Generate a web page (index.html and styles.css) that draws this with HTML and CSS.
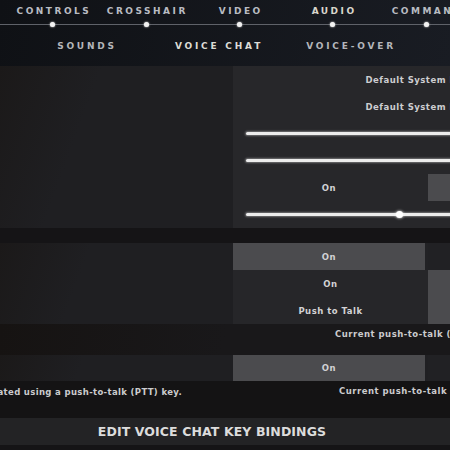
FILE: index.html
```html
<!DOCTYPE html>
<html>
  <head>
    <title>Settings - Audio</title>
    <meta name="viewport" content="width=device-width">
    <link rel="stylesheet" href="styles.css">
  </head>
  <body>
    <div class="header">
      <nav class="tabs">
        <div class="tab"><span>CONTROLS</span><i class="dot"></i></div>
        <div class="tab"><span>CROSSHAIR</span><i class="dot"></i></div>
        <div class="tab"><span>VIDEO</span><i class="dot"></i></div>
        <div class="tab active"><span>AUDIO</span><i class="dot"></i></div>
        <div class="tab"><span>COMMAND</span><i class="dot"></i></div>
      </nav>
      <nav class="subtabs">
        <div class="subtab">SOUNDS</div>
        <div class="subtab active">VOICE CHAT</div>
        <div class="subtab">VOICE-OVER</div>
      </nav>
    </div>

    <!-- devices and volumes -->
    <section class="panel devices">
      <div class="labels"></div>
      <div class="values">
        <div class="row text">Default System Device</div>
        <div class="row text">Default System Device</div>
        <div class="row"><div class="slider"></div></div>
        <div class="row"><div class="slider"></div></div>
        <div class="row toggle">
          <div class="opt">On</div>
          <div class="opt sel slim"></div>
        </div>
        <div class="row"><div class="slider"><i class="knob"></i></div></div>
      </div>
    </section>

    <!-- party / team voice -->
    <section class="panel voice">
      <div class="labels"></div>
      <div class="values grid3">
        <div class="opt sel">On</div>
        <div class="opt off"></div>
        <div class="opt dark">On</div>
        <div class="opt sel tall"></div>
        <div class="opt dark">Push to Talk</div>
      </div>
    </section>
    <div class="info">
      <div class="desc"></div>
      <div class="note">Current push-to-talk (PTT) key: V</div>
    </div>

    <section class="panel team">
      <div class="labels"></div>
      <div class="values toggle">
        <div class="opt sel">On</div>
        <div class="opt off"></div>
      </div>
    </section>
    <div class="info second">
      <div class="desc"><span>Team voice chat is activated using a push-to-talk (PTT) key.</span></div>
      <div class="note">Current push-to-talk (PTT) key: U</div>
    </div>

    <div class="bindings">EDIT VOICE CHAT KEY BINDINGS</div>
  </body>
</html>
```

FILE: styles.css
```css
* { margin: 0; padding: 0; box-sizing: border-box; }

body {
  width: 450px;
  height: 450px;
  overflow: hidden;
  background: #151416;
  font-family: "DejaVu Sans", sans-serif;
  font-weight: bold;
  color: #cfcfd1;
}

/* top navigation */
.header {
  height: 66px;
  background: linear-gradient(100deg, #0f1115, #191c23);
  overflow: hidden;
}

.tabs {
  display: grid;
  grid-template-columns: repeat(5, 93.4px);
  padding-left: 6px;
  height: 34px;
  background: linear-gradient(to bottom, transparent 24px, #5f6269 24px, #5f6269 25px, transparent 25px);
}

.tab {
  display: flex;
  flex-direction: column;
  align-items: center;
  padding-top: 5px;
  font-size: 9px;
  letter-spacing: 2.5px;
  color: #b9bcc2;
  white-space: nowrap;
}
.tab > span {
  line-height: 13px;
  margin-right: -2.5px;
}
.tab.active { color: #d9d6cc; }

.dot {
  width: 5px;
  height: 5px;
  margin-top: 4px;
  border-radius: 50%;
  background: #f2f2f2;
  box-shadow: 0 0 2px #fff;
}

.subtabs {
  display: grid;
  grid-template-columns: repeat(3, 132px);
  padding-left: 21px;
  padding-top: 6px;
}
.subtab {
  text-align: center;
  font-size: 9px;
  letter-spacing: 2.8px;
  line-height: 12px;
  color: #b4b6ba;
  white-space: nowrap;
}
.subtab.active { color: #dcdcd6; }

/* setting panels */
.panel {
  display: grid;
  grid-template-columns: 233px 384px;
  background: #1f1f22;
}
.labels {
  background: linear-gradient(110deg, #1b1919, #1f1f22 35%);
}
.values {
  background: #27272a;
}

.devices { height: 160px; }
.devices .values {
  display: grid;
  grid-template-rows: repeat(6, 1fr);
}

.row {
  display: flex;
  align-items: center;
}
.row.text {
  justify-content: center;
  font-size: 8.5px;
  letter-spacing: 0.5px;
  color: #cdcdd0;
}

.slider {
  position: relative;
  width: 100%;
  height: 3px;
  margin-left: 13px;
  border-radius: 2px;
  background: #ececec;
  box-shadow: 0 0 2px 1px rgba(255, 255, 255, 0.35);
}
.knob {
  position: absolute;
  left: 150px;
  top: -2px;
  width: 7px;
  height: 7px;
  border-radius: 50%;
  background: #fff;
  box-shadow: 0 0 3px #fff;
}

.toggle {
  display: grid;
  grid-template-columns: 192px 189px;
  column-gap: 3px;
}

.opt {
  display: flex;
  align-items: center;
  justify-content: center;
  font-size: 8.5px;
  letter-spacing: 0.5px;
  color: #d2d2d4;
}
.opt.sel { background: #4b4b4e; }
.opt.off { background: #212124; }
.opt.dark { background: #262629; }
.opt.slim { height: 27px; }

.voice {
  height: 81px;
  margin-top: 17px;
}
.grid3 {
  display: grid;
  grid-template-columns: 195px 189px;
  grid-template-rows: repeat(3, 27px);
  background: #222225;
}
.grid3 > .opt.sel:first-child { margin-right: 3px; }
.grid3 .tall { grid-column: 2; grid-row: 2 / span 2; }
.grid3 .dark:nth-child(3) { grid-column: 1; grid-row: 2; }
.grid3 .dark:nth-child(5) { grid-column: 1; grid-row: 3; }

/* descriptions under a panel */
.info {
  display: grid;
  grid-template-columns: 233px 384px;
  height: 31px;
  background: linear-gradient(100deg, #161312, #19181a 50%);
  font-size: 8.5px;
  letter-spacing: 0.5px;
  color: #cbcbcd;
  white-space: nowrap;
}
.note {
  padding-left: 102px;
  padding-top: 5px;
}
.desc {
  display: flex;
  justify-content: flex-end;
  overflow: hidden;
  padding-right: 51px;
  padding-top: 6px;
  letter-spacing: 0.35px;
}
.info.second {
  height: 37px;
  background: #141314;
}
.info.second .note { padding-left: 106px; }

.team {
  height: 26px;
}
.team .values { background: #202023; }

.bindings {
  height: 27px;
  line-height: 27px;
  background: #232325;
  text-align: center;
  padding-right: 26px;
  font-size: 12.5px;
  letter-spacing: 0.1px;
  color: #dcdcdc;
}
```
